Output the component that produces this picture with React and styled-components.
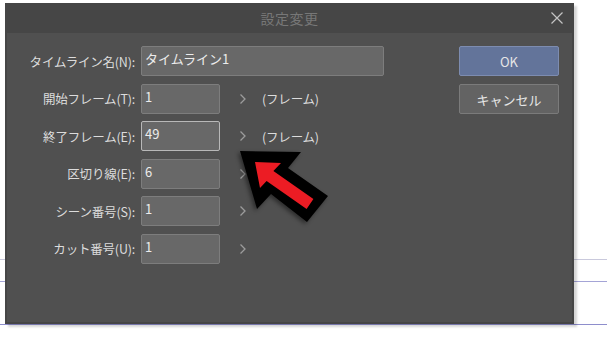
import React from 'react';
import styled, { createGlobalStyle } from 'styled-components';

const GlobalStyle = createGlobalStyle`
  html, body {
    margin: 0;
    padding: 0;
    background: #ffffff;
  }
  * { box-sizing: border-box; }
`;

const Page = styled.div`
  position: relative;
  width: 607px;
  height: 337px;
  overflow: hidden;
  padding: 3px 0 0 5px;
  font-family: "Noto Sans CJK JP", "Noto Sans", sans-serif;
  background:
    linear-gradient(#c9c9dc, #c9c9dc) 0 259px / 100% 1px no-repeat,
    linear-gradient(#a4a4d6, #a4a4d6) 0 281px / 100% 1px no-repeat,
    linear-gradient(#8e8ecc, #8e8ecc) 0 324px / 100% 1px no-repeat,
    #ffffff;
`;

const Dialog = styled.div`
  width: 569px;
  height: 321px;
  background: #464646;
  padding: 0 2px 2px 2px;
  display: flex;
  flex-direction: column;
  box-shadow: 3px 3px 2px rgba(0, 0, 0, 0.16);
`;

const TitleBar = styled.div`
  height: 30px;
  position: relative;
  display: flex;
  align-items: center;
  justify-content: center;
  color: #777777;
  font-size: 14px;
  letter-spacing: 0.5px;
`;

const CloseButton = styled.div`
  position: absolute;
  right: 9px;
  top: 9px;
  width: 12px;
  height: 12px;
  display: flex;
`;

const Body = styled.div`
  flex: 1;
  background: #505050;
  display: flex;
  justify-content: space-between;
  padding: 13px 13px 0 0;
`;

const Form = styled.div`
  display: flex;
  flex-direction: column;
  gap: 7.6px;
`;

const Row = styled.div`
  display: flex;
  align-items: center;
  height: 30px;
`;

const Label = styled.div`
  width: 128px;
  text-align: right;
  color: #dcdcdc;
  font-size: 12.5px;
  letter-spacing: -0.2px;
  margin-right: 6px;
  white-space: nowrap;
`;

const Field = styled.div`
  width: ${p => (p.wide ? '243px' : '79px')};
  height: 30px;
  background: #686868;
  border: 1px solid ${p => (p.focused ? '#b8b8b8' : '#7d7d7d')};
  border-radius: 2px;
  color: #ececec;
  font-size: 13px;
  padding: 3px 4px 0 3px;
  line-height: 18px;
`;

const Chevron = styled.div`
  margin-left: 19px;
  width: 8px;
  height: 12px;
  display: flex;
`;

const Unit = styled.div`
  margin-left: 15px;
  color: #dcdcdc;
  font-size: 12.5px;
  letter-spacing: -0.2px;
`;

const Buttons = styled.div`
  display: flex;
  flex-direction: column;
  gap: 8px;
`;

const Button = styled.div`
  width: 100px;
  height: 30px;
  display: flex;
  align-items: center;
  justify-content: center;
  border-radius: 2px;
  font-size: 13px;
  color: #e6e6e6;
  background: ${p => (p.primary ? '#63749a' : '#636363')};
  border: 1px solid ${p => (p.primary ? '#7d8cb0' : '#7b7b7b')};
`;

const Overlay = styled.svg`
  position: absolute;
  left: 0;
  top: 0;
  pointer-events: none;
`;

const rows = [
  { label: 'タイムライン名(N):', value: 'タイムライン1', wide: true },
  { label: '開始フレーム(T):', value: '1', chevron: true, unit: '(フレーム)' },
  { label: '終了フレーム(E):', value: '49', chevron: true, unit: '(フレーム)', focused: true },
  { label: '区切り線(E):', value: '6', chevron: true },
  { label: 'シーン番号(S):', value: '1', chevron: true },
  { label: 'カット番号(U):', value: '1', chevron: true },
];

const ChevronIcon = () => (
  <svg width="8" height="12" viewBox="0 0 8 12">
    <polyline points="1.5,1.5 6,6 1.5,10.5" fill="none" stroke="#9c9c9c" strokeWidth="1.3" />
  </svg>
);

export default function App() {
  return (
    <Page>
      <GlobalStyle />
      <Dialog>
        <TitleBar>
          設定変更
          <CloseButton>
            <svg width="12" height="12" viewBox="0 0 12 12">
              <path d="M0.5 0.5 L11.5 11.5 M11.5 0.5 L0.5 11.5" stroke="#c4c4c4" strokeWidth="1.2" />
            </svg>
          </CloseButton>
        </TitleBar>
        <Body>
          <Form>
            {rows.map((r, i) => (
              <Row key={i}>
                <Label>{r.label}</Label>
                <Field wide={r.wide} focused={r.focused}>{r.value}</Field>
                {r.chevron && (
                  <Chevron>
                    <ChevronIcon />
                  </Chevron>
                )}
                {r.unit && <Unit>{r.unit}</Unit>}
              </Row>
            ))}
          </Form>
          <Buttons>
            <Button primary>OK</Button>
            <Button>キャンセル</Button>
          </Buttons>
        </Body>
      </Dialog>
      <Overlay width="607" height="337" viewBox="0 0 607 337">
        <polygon
          points="240,151 301,152 288,168 328,196 307,222 271,194 257,209"
          fill="#000000"
          style={{ filter: 'drop-shadow(-2px 2px 2px rgba(0,0,0,0.45))' }}
        />
        <polygon
          points="255,162 281,163 273.4,171 313.4,199 306.6,209 266.6,181 260,188"
          fill="#ec1c24"
        />
      </Overlay>
    </Page>
  );
}
